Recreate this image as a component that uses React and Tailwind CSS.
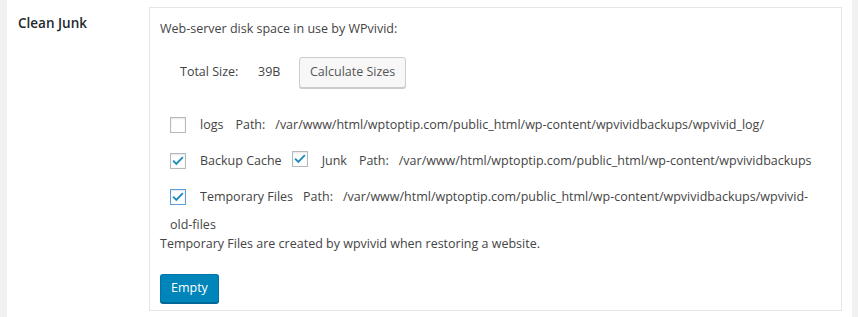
import React from 'react';

const Box = ({ checked, focus }) => (
  <span
    className={`inline-flex items-center justify-center w-4 h-4 bg-white border shrink-0 shadow-[inset_0_1px_2px_rgba(0,0,0,0.1)] ${
      focus ? 'border-[#5b9dd9] shadow-[0_0_2px_rgba(30,140,190,0.8)]' : 'border-[#b4b9be]'
    }`}
  >
    {checked && (
      <svg width="14" height="14" viewBox="0 0 20 20">
        <path d="M4 10.5l3.6 3.6L16 5.5" fill="none" stroke="#1e8cbe" strokeWidth="2.8" strokeLinecap="square" />
      </svg>
    )}
  </span>
);

export default function App() {
  return (
    <div
      className="w-[858px] h-[317px] bg-[#f1f1f1] pl-[7px] pr-[6px] text-[12.5px] text-[#444]"
      style={{ fontFamily: '"Open Sans", "Noto Sans", sans-serif' }}
    >
      <div className="h-full bg-white flex pt-[7px]">
        <div className="w-[142px] pl-[11px] pt-[3px] text-[13.5px] font-semibold text-[#23282d] leading-[26px]">
          Clean Junk
        </div>
        <div className="w-[693px] h-[304px] border border-[#e5e5e5] pt-[12px] pl-[10px]">
          <div className="leading-[18px]">Web-server disk space in use by WPvivid:</div>

          <div className="flex items-center h-[32px] mt-[18px] pl-[20px]">
            <span className="w-[78px]">Total Size:</span>
            <span className="w-[41px]">39B</span>
            <button className="h-[31px] px-[10px] bg-[#f7f7f7] border border-[#cccccc] rounded-[3px] shadow-[0_1px_0_#cccccc] text-[#555]">
              Calculate Sizes
            </button>
          </div>

          <div className="mt-[19px] pl-[10px]">
            <div className="flex items-center h-[36px] whitespace-nowrap">
              <Box />
              <span className="ml-[14px]">logs</span>
              <span className="ml-[12px]">Path:</span>
              <span className="ml-[10px]">/var/www/html/wptoptip.com/public_html/wp-content/wpvividbackups/wpvivid_log/</span>
            </div>
            <div className="flex items-center h-[36px] whitespace-nowrap">
              <Box checked />
              <span className="ml-[14px]">Backup Cache</span>
              <span className="ml-[10px]"><Box checked /></span>
              <span className="ml-[14px]">Junk</span>
              <span className="ml-[12px]">Path:</span>
              <span className="ml-[10px]">/var/www/html/wptoptip.com/public_html/wp-content/wpvividbackups</span>
            </div>
            <div className="flex items-center h-[36px] whitespace-nowrap">
              <Box checked focus />
              <span className="ml-[14px]">Temporary Files</span>
              <span className="ml-[10px]">Path:</span>
              <span className="ml-[10px]">/var/www/html/wptoptip.com/public_html/wp-content/wpvividbackups/wpvivid-</span>
            </div>
            <div className="leading-[20px] h-[20px]">old-files</div>
          </div>
          <div className="leading-[18px]">Temporary Files are created by wpvivid when restoring a website.</div>

          <button className="mt-[21px] h-[29px] px-[10px] bg-[#0085ba] border border-[#0073aa] border-b-[#006799] rounded-[3px] shadow-[0_1px_0_#006799] text-white">
            Empty
          </button>
        </div>
      </div>
    </div>
  );
}
